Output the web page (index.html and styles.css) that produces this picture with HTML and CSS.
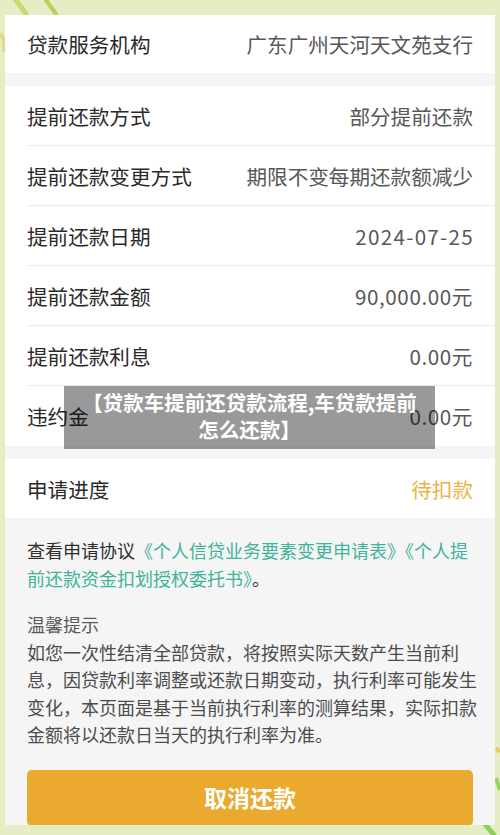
FILE: index.html
```html
<!DOCTYPE html>
<html lang="zh-CN">
<head>
<meta charset="utf-8">
<title>提前还款详情</title>
<link rel="stylesheet" href="styles.css">
</head>
<body>
<div class="page">
  <svg class="decor" width="500" height="835" viewBox="0 0 500 835" aria-hidden="true">
    <path d="M16 0 L26 14" stroke="#c9d870" stroke-width="5" stroke-linecap="round"/>
    <path d="M46 0 L56 14" stroke="#b8cf5a" stroke-width="4" stroke-linecap="round"/>
    <path d="M0 34 Q6 40 4 52" stroke="#e0d98a" stroke-width="4" fill="none"/>
    <path d="M470 806 L494 835" stroke="#8fcf5a" stroke-width="5" stroke-linecap="round"/>
    <path d="M496 778 L500 790" stroke="#9ad45c" stroke-width="4"/>
    <path d="M496 748 L500 752" stroke="#e4cf5a" stroke-width="4"/>
  </svg>
  <main class="panel">
    <section class="group">
      <div class="row row-top">
        <span class="label">贷款服务机构</span>
        <span class="value">广东广州天河天文苑支行</span>
      </div>
    </section>
    <section class="group">
      <div class="row"><span class="label">提前还款方式</span><span class="value">部分提前还款</span></div>
      <div class="row"><span class="label">提前还款变更方式</span><span class="value">期限不变每期还款额减少</span></div>
      <div class="row"><span class="label">提前还款日期</span><span class="value date">2024-07-25</span></div>
      <div class="row"><span class="label">提前还款金额</span><span class="value num">90,000.00元</span></div>
      <div class="row"><span class="label">提前还款利息</span><span class="value num">0.00元</span></div>
      <div class="row"><span class="label">违约金</span><span class="value num">0.00元</span></div>
    </section>
    <section class="group">
      <div class="row row-status"><span class="label">申请进度</span><span class="value status">待扣款</span></div>
    </section>
    <div class="notes">
      <p class="agreement">查看申请协议<a class="link">《个人信贷业务要素变更申请表》《个人提<br>前还款资金扣划授权委托书》</a>。</p>
      <h2 class="tips-title">温馨提示</h2>
      <p class="tips">如您一次性结清全部贷款，将按照实际天数产生当前利<br>息，因贷款利率调整或还款日期变动，执行利率可能发生<br>变化，本页面是基于当前执行利率的测算结果，实际扣款<br>金额将以还款日当天的执行利率为准。</p>
      <button class="cancel" type="button">取消还款</button>
    </div>
    <div class="caption">【贷款车提前还贷款流程,车贷款提前怎么还款】</div>
  </main>
</div>
</body>
</html>
```

FILE: styles.css
```css
* { box-sizing: border-box; }
html, body { margin: 0; padding: 0; }
body {
  background: #e4edc3;
  font-family: "Noto Sans CJK SC", "Noto Sans", sans-serif;
  width: 500px;
  height: 835px;
  overflow: hidden;
}
.page {
  position: relative;
  width: 500px;
  height: 835px;
  padding: 15px 5px 0 5px;
}
.decor {
  position: absolute;
  left: 0;
  top: 0;
}
.panel {
  position: relative;
  background: #f5f5f6;
  width: 490px;
  height: 810px;
  overflow: hidden;
}
.group {
  background: #ffffff;
  margin-bottom: 13px;
}
.row {
  display: flex;
  justify-content: space-between;
  align-items: center;
  height: 60px;
  margin-left: 22px;
  padding-right: 22px;
  border-bottom: 1px solid #ececec;
  font-size: 20.6px;
}
.row:last-child { border-bottom: none; }
.row-top { height: 58px; }
.row-status { height: 59px; }
.label { color: #2a2a2a; }
.value { color: #585858; }
.num { letter-spacing: 0.6px; }
.date { letter-spacing: 1.3px; margin-right: -1px; }
.status { color: #eab54a; }
.notes {
  margin-top: -13px;
  padding: 18px 22px 0 22px;
  font-size: 18px;
}
.agreement {
  margin: 0;
  line-height: 28px;
  color: #2e2e2e;
  white-space: nowrap;
}
.link { color: #3fb39b; }
.tips-title {
  margin: 19px 0 0 0;
  font-size: 18px;
  font-weight: normal;
  line-height: 27.5px;
  color: #5a5a5a;
}
.tips {
  margin: 0;
  line-height: 27.5px;
  color: #4c4c4c;
  white-space: nowrap;
}
.cancel {
  display: block;
  width: 446px;
  height: 56px;
  margin-top: 21px;
  padding-bottom: 3px;
  border: none;
  border-radius: 5px;
  background: #e9aa2f;
  color: #ffffff;
  font-family: "Noto Sans CJK SC", sans-serif;
  font-size: 23px;
  font-weight: bold;
}
.caption {
  position: absolute;
  left: 59px;
  top: 371px;
  width: 371px;
  height: 63px;
  padding: 3px 16px 0 16px;
  background: rgba(0, 0, 0, 0.4);
  color: #ffffff;
  font-size: 20.5px;
  font-weight: bold;
  line-height: 27px;
  text-align: center;
}
```
